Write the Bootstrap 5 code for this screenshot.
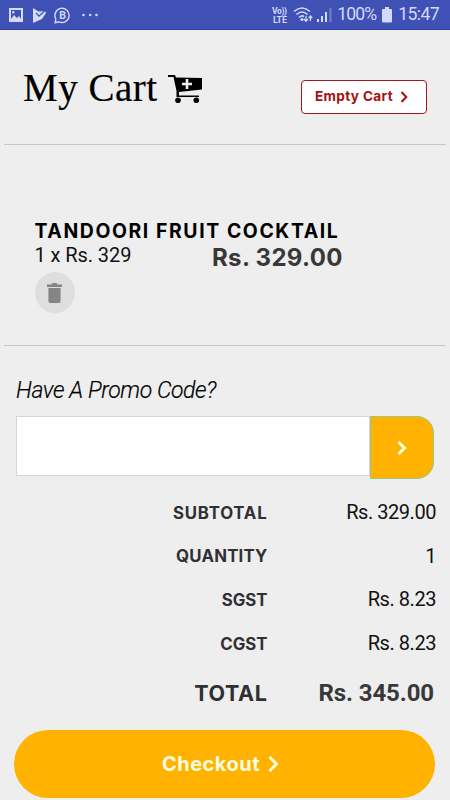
<!DOCTYPE html>
<html lang="en">
<head>
<meta charset="utf-8">
<meta name="viewport" content="width=device-width, initial-scale=1">
<title>My Cart</title>
<link href="https://cdn.jsdelivr.net/npm/bootstrap@5.3.0/dist/css/bootstrap.min.css" rel="stylesheet">
<style>
body{background:#eee;font-family:Roboto,sans-serif;color:#111;width:450px;height:800px;overflow:hidden;line-height:1}
svg{display:block;flex:none}
.geo{font-family:Inter,sans-serif;font-weight:700;white-space:nowrap}
.status{height:30px;background:#3f51b5;border-bottom:1px solid #2f409f;color:#d3dafa;padding:1px 11px 0 8px}
.status-text{font-size:17.6px}
.battery-level{margin-left:5px;letter-spacing:-.9px}
.clock{margin-left:6px;letter-spacing:-.6px}
.battery{margin-left:6px}
.wifi{margin-left:3px}
.cart-head{height:115px;margin:0 4px;padding:2px 19px 0 19px;border-bottom:1px solid #c6c6c6}
.cart-title{font-family:"Liberation Serif",serif;font-size:39px;color:#000;letter-spacing:.5px;line-height:44px;-webkit-text-stroke:.2px #000}
.cart-icon{margin:2px 0 0 10px}
.btn-empty{width:126px;height:34px;background:#fff;border:1.5px solid #a3181b;border-radius:4px;color:#a8100f;font-size:13.6px;letter-spacing:.33px;padding:0 0 1px 13px;margin-top:18px}
.btn-empty:hover{background:#fff;color:#a8100f}
.item{height:201px;margin:0 4px;padding:75px 0 0 30.5px;border-bottom:1px solid #c6c6c6}
.item-name{font-size:19.4px;color:#000;line-height:22px;letter-spacing:1.6px}
.item-qty{font-size:20px;line-height:26px;width:177.500px;letter-spacing:-.08px}
.item-price{font-size:24px;line-height:31px;color:#38383a;letter-spacing:.35px}
.btn-trash{width:40px;height:41px;background:#dedede;margin-top:-1px}
.promo{padding:31px 16px 0 16px}
.promo label{font-size:23px;font-weight:300;line-height:28px;color:#000;letter-spacing:-.4px;-webkit-text-stroke:.2px #000}
.promo .input-group{margin-top:11px}
.promo .form-control{height:60px;border:1px solid #d5d5d5;border-radius:0}
.btn-apply{width:64px;height:63px;background:#ffb300!important;border:1.5px solid #9bc687!important;border-radius:0 17px 17px 0!important}
.promo .btn-apply{margin-left:0!important}
.totals{padding-top:11px}
.sum{height:43.8px}
.sum .geo{width:267.500px;font-size:16.8px;color:#303034;text-align:right;padding-top:2px}
.sum-value{font-size:20px;letter-spacing:-.45px;padding-right:14px}
.label-subtotal{letter-spacing:.8px}
.label-quantity{letter-spacing:.2px}
.sum-total{height:54px}
.sum-total .geo{font-size:21.5px;letter-spacing:.6px;padding-top:3px}
.sum-total .sum-value{font-size:24px;font-weight:700;letter-spacing:-.1px;color:#38383a;padding:1px 16px 0 0}
.btn-checkout{width:421px;height:68px;margin:11px 15px 0 14px;padding-right:20px;background:#ffb300;color:#fffde0;font-size:20px;letter-spacing:.5px}
.btn-checkout:hover{background:#ffb300;color:#fffde0}
</style>
</head>
<body>
<header class="status d-flex align-items-center justify-content-between">
  <div class="d-flex align-items-center">
    <svg width="16" height="15" viewBox="0 0 16 15" fill="#d3dafa"><path fill-rule="evenodd" d="M1 0h14v14H1zM3 2v9l3-4 3 3 2-2 2 3V2z"/><circle cx="5.2" cy="4.3" r="1.2"/></svg>
    <svg class="ms-2" width="14" height="15" viewBox="0 0 14 15" fill="#d3dafa"><path d="M1 0l5.500 3.500L13 3l1 2-4 6-9 4z"/><path d="M4 5l3 3.200L13.500 2" fill="none" stroke="#3f51b5" stroke-width="1.300"/></svg>
    <svg class="ms-2" width="17" height="17" viewBox="0 0 17 17"><path d="M1.2 15.800l.6-4A7.100 7.100 0 1 1 5 14.800z" fill="none" stroke="#d3dafa" stroke-width="1.400"/><text x="8.6" y="12.200" text-anchor="middle" font-family="Roboto" font-weight="700" font-size="10.5" fill="#d3dafa">B</text></svg>
    <svg width="30" height="4" viewBox="0 0 30 4" fill="#d3dafa"><circle cx="12.500" cy="2" r="1.300"/><circle cx="19.200" cy="2" r="1.300"/><circle cx="25.500" cy="2" r="1.300"/></svg>
  </div>
  <div class="d-flex align-items-center">
    <svg width="18" height="18" viewBox="0 0 18 18" font-family="Roboto" font-weight="700" fill="#d3dafa"><text x="0" y="8" font-size="8.5" textLength="15">Vo))</text><text x="1" y="17" font-size="9" textLength="14">LTE</text></svg>
    <svg class="wifi" width="20" height="18" viewBox="0 0 20 18" fill="none" stroke="#d3dafa" stroke-width="1.6"><path d="M1 5.500Q9-1.500 17 5.500M3.500 8.500Q9 3.500 14.500 8.500M6 11.500Q9 9 11 10.500"/><path d="M13 10v5m-2-2l2 2.300 2-2.300M17.500 15v-5m-1.800 2l1.800-2 1.800 2" stroke-width="1.200"/><circle cx="9" cy="13.500" r=".8"/></svg>
    <svg class="ms-1" width="15" height="16" viewBox="0 0 15 16" fill="#d3dafa"><path d="M0 12h2v3H0zM4 9h2v6H4zM8 5h2v10H8z"/><path opacity=".35" d="M12.500 1h2v14h-2z"/></svg>
    <span class="status-text battery-level">100%</span>
    <svg class="battery" width="10" height="16" viewBox="0 0 10 16" fill="#d3dafa"><path d="M3 0h4v2h2q1 0 1 1v11.500q0 1-1 1H1q-1 0-1-1V3q0-1 1-1h2z"/></svg>
    <span class="status-text clock">15:47</span>
  </div>
</header>

<section class="cart-head d-flex align-items-center justify-content-between">
  <div class="d-flex align-items-center">
    <h1 class="cart-title mb-0">My Cart</h1>
    <svg class="cart-icon" width="35" height="30" viewBox="0 0 35 30"><path d="M0 1h7l1 2.500 26 .5v11.500L11 18v3.500h20V23H8.500V17L5.500 3H0z"/><circle cx="10" cy="26.300" r="2.800"/><circle cx="28.300" cy="26.300" r="2.800"/><path d="M19 5v10M14 10h10" stroke="#eee" stroke-width="2.600"/></svg>
  </div>
  <button class="btn btn-empty geo d-flex align-items-center" type="button">Empty Cart
    <svg class="ms-2" width="8" height="12" viewBox="0 0 8 12" fill="none" stroke="#a8100f" stroke-width="2"><path d="M.5 1L5.300 6l-4.800 5"/></svg>
  </button>
</section>

<section class="item">
  <div class="item-name geo">TANDOORI FRUIT COCKTAIL</div>
  <div class="d-flex"><div class="item-qty">1 x Rs. 329</div><div class="item-price geo">Rs. 329.00</div></div>
  <button class="btn btn-trash rounded-circle border-0 p-0 d-flex align-items-center justify-content-center" type="button" aria-label="Remove">
    <svg width="15" height="20" viewBox="0 0 16 20" preserveAspectRatio="none" fill="#858585"><path d="M0 1.500h4.500L6 0h4l1.500 1.500H16V4H0zM1.500 5h13v13q0 2-2 2h-9q-2 0-2-2z"/></svg>
  </button>
</section>

<section class="promo">
  <label class="fst-italic d-block" for="promo">Have A Promo Code?</label>
  <div class="input-group flex-nowrap align-items-start">
    <input class="form-control shadow-none" id="promo" type="text">
    <button class="btn btn-apply p-0 d-flex align-items-center justify-content-center" type="button" aria-label="Apply"><svg width="10" height="14" viewBox="0 0 10 14" fill="none" stroke="#fffde0" stroke-width="3"><path d="M1.500 1L7.500 7l-6 6"/></svg></button>
  </div>
</section>

<section class="totals">
  <div class="sum d-flex align-items-center justify-content-between"><span class="geo label-subtotal">SUBTOTAL</span><span class="sum-value">Rs. 329.00</span></div>
  <div class="sum d-flex align-items-center justify-content-between"><span class="geo label-quantity">QUANTITY</span><span class="sum-value">1</span></div>
  <div class="sum d-flex align-items-center justify-content-between"><span class="geo">SGST</span><span class="sum-value">Rs. 8.23</span></div>
  <div class="sum d-flex align-items-center justify-content-between"><span class="geo">CGST</span><span class="sum-value">Rs. 8.23</span></div>
  <div class="sum sum-total d-flex align-items-center justify-content-between"><span class="geo">TOTAL</span><span class="sum-value">Rs. 345.00</span></div>
</section>

<button class="btn btn-checkout geo rounded-pill border-0 d-flex align-items-center justify-content-center" type="button">Checkout
  <svg class="ms-2" width="11" height="16" viewBox="0 0 11 16" fill="none" stroke="#fffde0" stroke-width="3"><path d="M1.500 1L8.500 8l-7 7"/></svg>
</button>
<script src="https://cdn.jsdelivr.net/npm/bootstrap@5.3.0/dist/js/bootstrap.bundle.min.js"></script>
</body>
</html>
